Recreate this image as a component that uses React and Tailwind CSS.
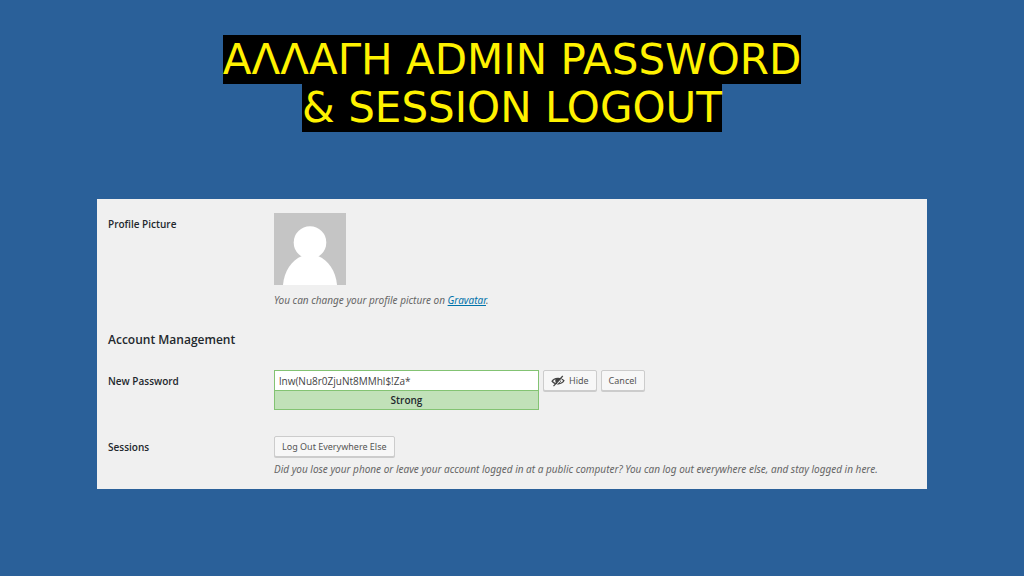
import React from "react";

const button =
  "flex h-[21px] items-center rounded-xs border border-[#cccccc] bg-[#f7f7f7] px-[7px] font-['Noto_Sans',sans-serif] text-[9px] text-[#555555] shadow-[0_1px_0_#cccccc]";
const label = "text-[10px] leading-4 font-semibold text-[#23282d]";
const row = "grid grid-cols-[166px_minmax(0,1fr)]";
const note = "font-['Noto_Sans',sans-serif] text-[10px] leading-4 text-[#666666] italic";

function HiddenEye() {
  return (
    <svg viewBox="0 0 14 12" className="h-3 w-[14px]" fill="none" stroke="#444444" aria-hidden="true">
      <path d="M1 6.2C3 2.6 10.4 2.3 13 5.6C11 9.7 3.6 10 1 6.2Z" strokeWidth="1.2" />
      <path d="M4.6 4.2C5.3 3 8.4 3 9 4.7L5.6 8.2C4.2 7 3.9 5.2 4.6 4.2Z" fill="#444444" stroke="none" />
      <path d="M9.6 5.2C9.7 6.8 8.8 8 7.2 8.1" strokeWidth="1" />
      <path d="M3.2 12L12.6 2" stroke="#f7f7f7" strokeWidth="0.7" />
      <path d="M2.5 11.2L11.8 1" strokeWidth="1.2" />
    </svg>
  );
}

function Avatar() {
  return (
    <svg viewBox="0 0 72 72" className="block h-[72px] w-[72px]" role="img" aria-label="Profile picture">
      <path fill="#c5c5c5" d="M0 0H72V72H0Z" />
      <circle cx="36" cy="29.5" r="16.3" fill="#ffffff" />
      <path fill="#ffffff" d="M9 72C10 58 18 47 28 43H44C54 47 62 58 63 72Z" />
    </svg>
  );
}

export default function App() {
  return (
    <main className="min-h-screen bg-[#2a6099] px-[97px] pt-9 pb-8">
      <h1 className="text-center font-['DejaVu_Sans',sans-serif] text-[42px] leading-[48px] text-[#fff200]">
        <span className="bg-black">ΑΛΛΑΓΗ ADMIN PASSWORD</span>
        <br />
        <span className="bg-black">&amp; SESSION LOGOUT</span>
      </h1>

      <form
        className="mt-[67px] bg-[#f0f0f0] px-[11px] pt-[14px] pb-3 font-['Open_Sans',sans-serif]"
        onSubmit={(e) => e.preventDefault()}
      >
        <div className={row}>
          <div className={label + " pt-[3px]"}>Profile Picture</div>
          <div>
            <Avatar />
            <p className={note + " mt-[7px]"}>
              You can change your profile picture on{" "}
              <a href="#gravatar" className="text-[#0073aa] underline">
                Gravatar
              </a>
              .
            </p>
          </div>
        </div>

        <h2 className="mt-[22px] text-[12px] leading-5 font-semibold text-[#23282d]">Account Management</h2>

        <div className={row + " mt-5"}>
          <label htmlFor="new-password" className={label + " pt-[3px]"}>
            New Password
          </label>
          <div className="flex items-start gap-1">
            <div className="w-[265px]">
              <input
                id="new-password"
                type="text"
                defaultValue="lnw(Nu8r0ZjuNt8MMhl$!Za*"
                className="block h-[21px] w-full border border-[#83c373] bg-white px-1 text-[10px] text-[#444444] outline-none"
              />
              <div className="h-[19px] border border-t-0 border-[#83c373] bg-[#c1e1b9] text-center text-[10px] leading-[18px] font-semibold text-[#23282d]">
                Strong
              </div>
            </div>
            <button type="button" className={button + " gap-1"}>
              <HiddenEye />
              Hide
            </button>
            <button type="button" className={button}>
              Cancel
            </button>
          </div>
        </div>

        <div className={row + " mt-[26px]"}>
          <div className={label + " pt-[3px]"}>Sessions</div>
          <div>
            <button type="button" className={button}>
              Log Out Everywhere Else
            </button>
            <p className={note + " mt-1"}>
              Did you lose your phone or leave your account logged in at a public computer? You can log out everywhere
              else, and stay logged in here.
            </p>
          </div>
        </div>
      </form>
    </main>
  );
}
